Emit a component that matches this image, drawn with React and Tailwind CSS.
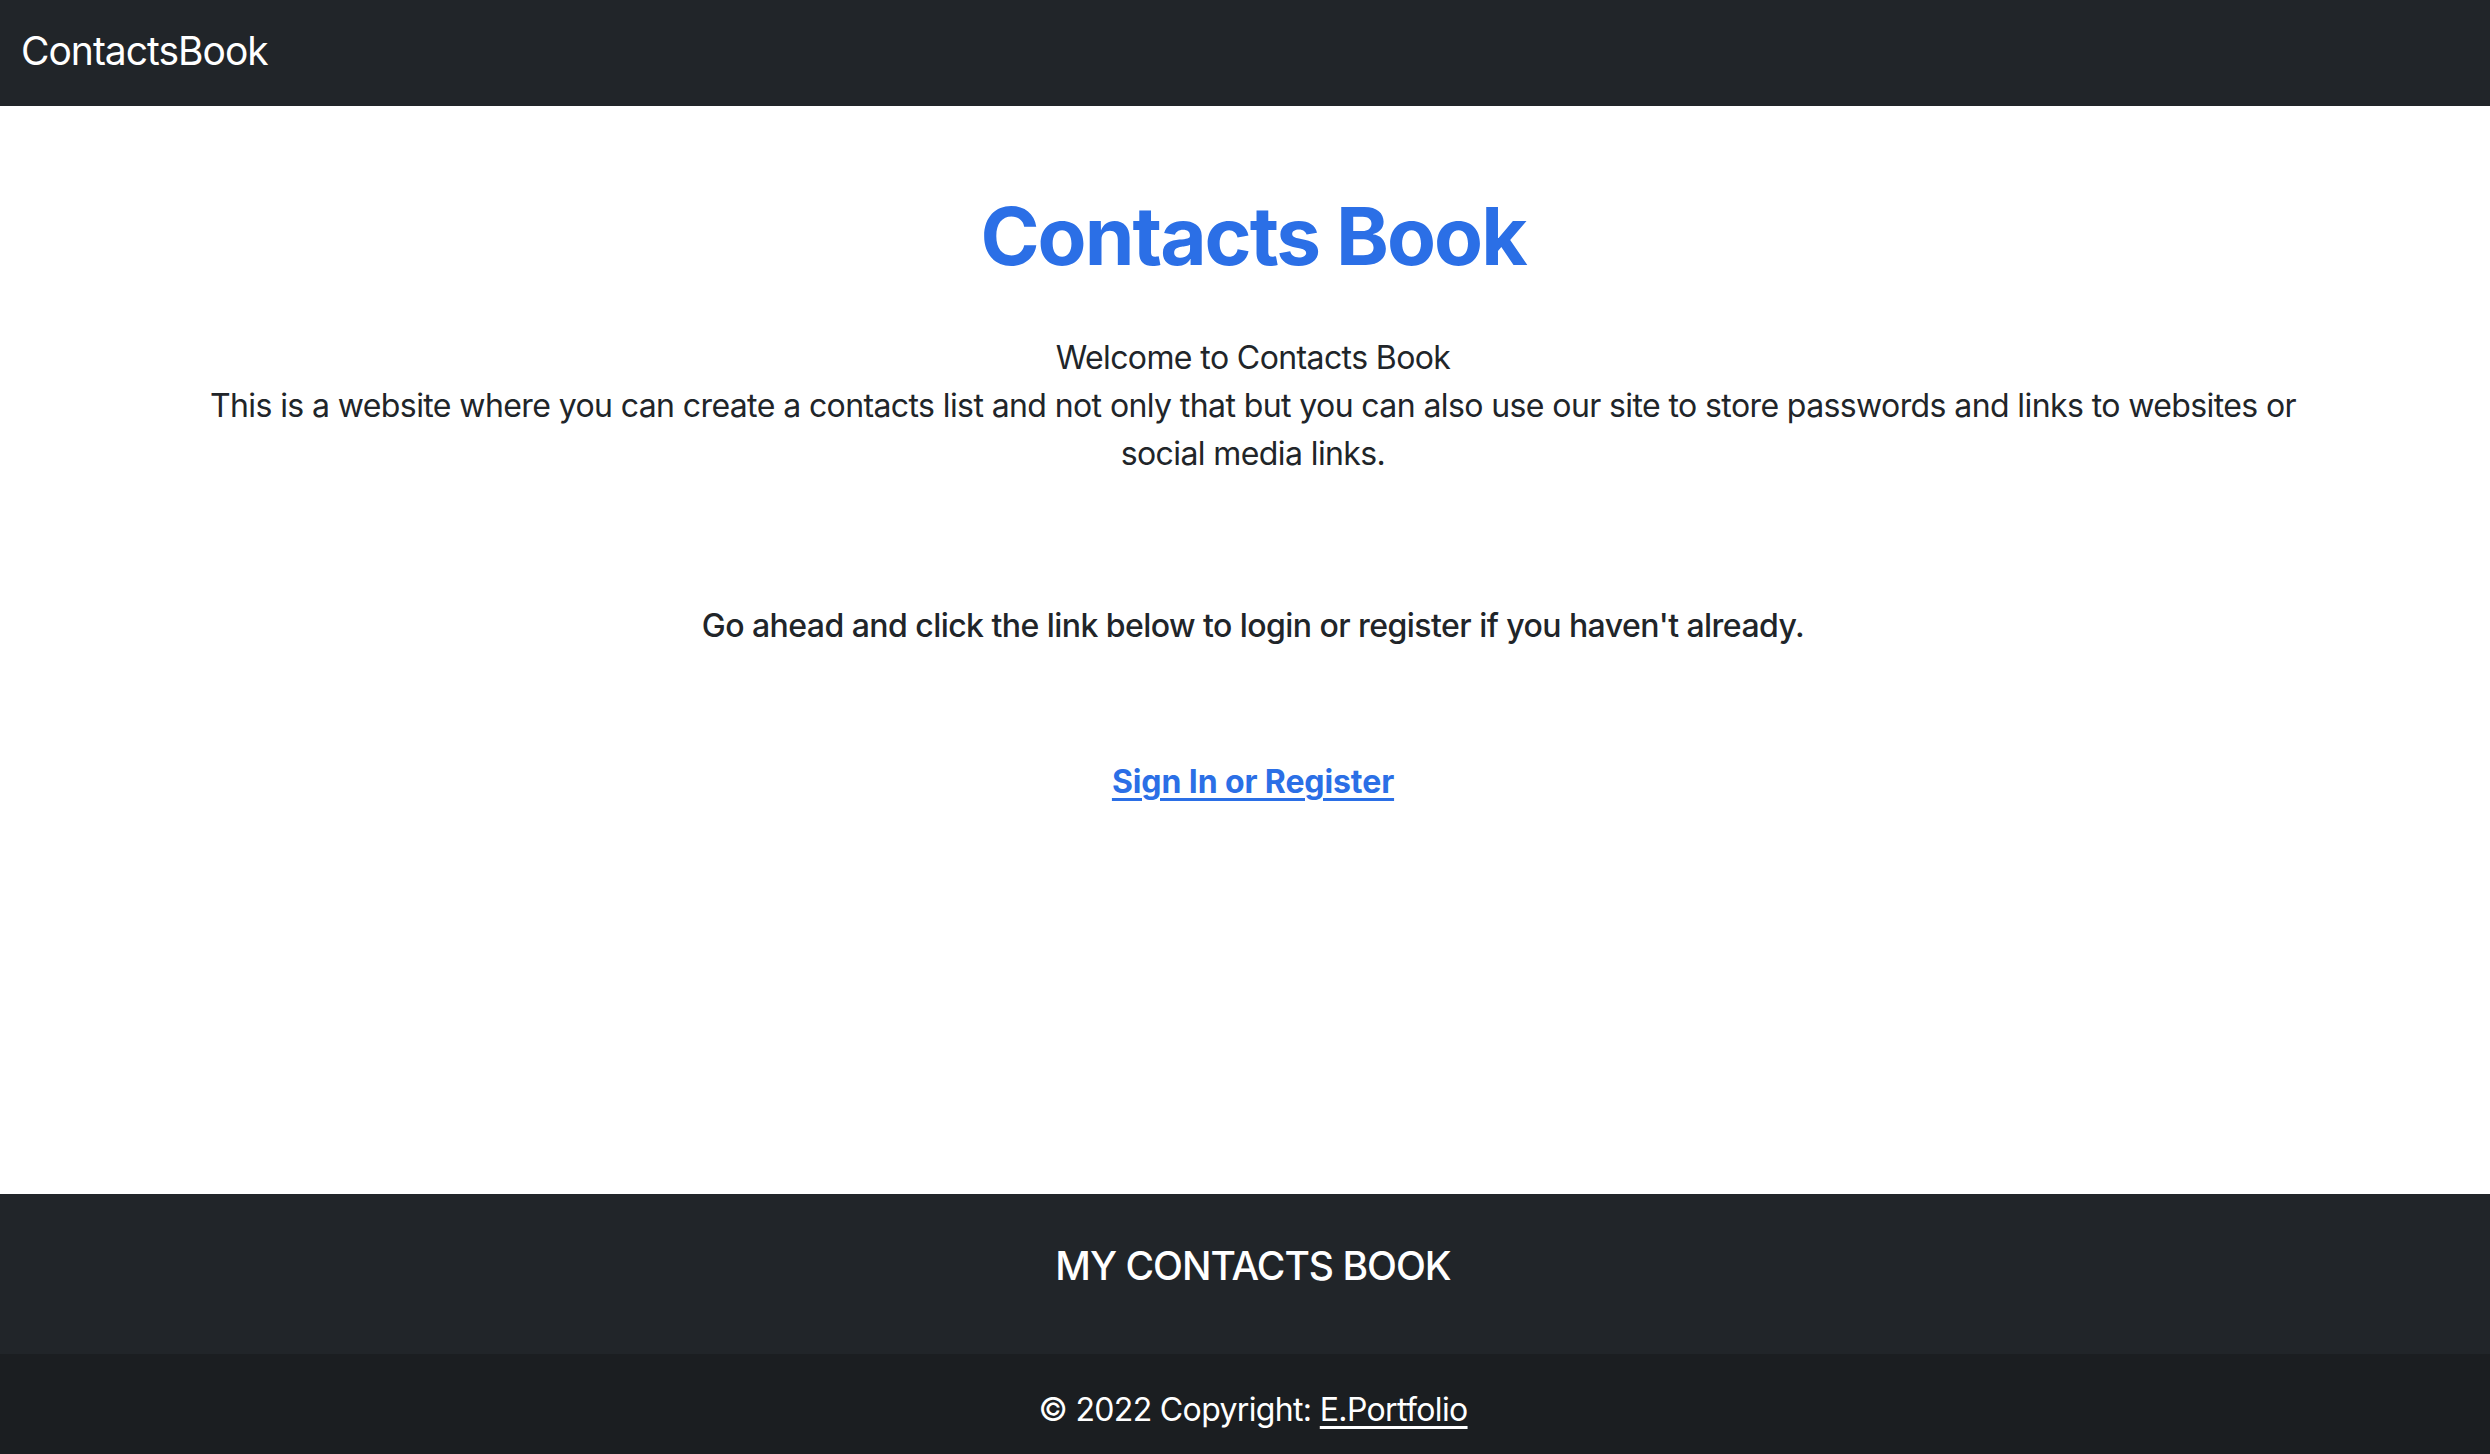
import React from 'react';

const Home = () => {
  return (
    <div className="min-h-screen flex flex-col bg-white text-[#212529] font-['Inter','Liberation_Sans',sans-serif]">
      {/* Top navbar */}
      <nav className="h-[106px] bg-[#212529] flex items-center px-[21px]">
        <a href="#" className="text-white text-[39px] leading-[60px] tracking-[-1px] pb-[5px]">
          ContactsBook
        </a>
      </nav>

      {/* Landing content */}
      <main className="flex-1 text-center pl-4">
        <div className="max-w-[2280px] mx-auto px-6 pt-[82px]">
          <h1 className="text-[80px] leading-[96px] font-bold text-[#2b6fe6] tracking-[-2px]">Contacts Book</h1>
          <p className="mt-[50px] max-w-[2120px] mx-auto text-[32px] leading-[48px] tracking-[-0.6px]">
            Welcome to Contacts Book
            <br />
            This is a website where you can create a contacts list and not only that but you can also use our site to store passwords and links to websites or social media links.
          </p>
          <p className="mt-[124px] text-[32px] leading-[48px] font-medium tracking-[-0.55px]">
            Go ahead and click the link below to login or register if you haven't already.
          </p>
          <div className="mt-[108px]">
            <a href="#" className="text-[32px] leading-[48px] font-bold text-[#2b6fe6] underline underline-offset-[5px] tracking-[-0.1px]">
              Sign In or Register
            </a>
          </div>
        </div>
      </main>

      {/* Footer */}
      <footer className="bg-[#212529] text-white text-center pl-4">
        <div className="h-[160px] pt-[48px]">
          <h5 className="text-[39px] leading-[48px] font-medium tracking-[-1px]">MY CONTACTS BOOK</h5>
        </div>
        <div className="-ml-4 pl-4 h-[100px] bg-[#1b1e21] flex items-center justify-center text-[32px] leading-[48px] tracking-[-0.65px] pt-[12px]">
          <span>
            © 2022 Copyright:{' '}
            <a href="#" className="underline underline-offset-[5px]">E.Portfolio</a>
          </span>
        </div>
      </footer>
    </div>
  );
};

export default Home;
